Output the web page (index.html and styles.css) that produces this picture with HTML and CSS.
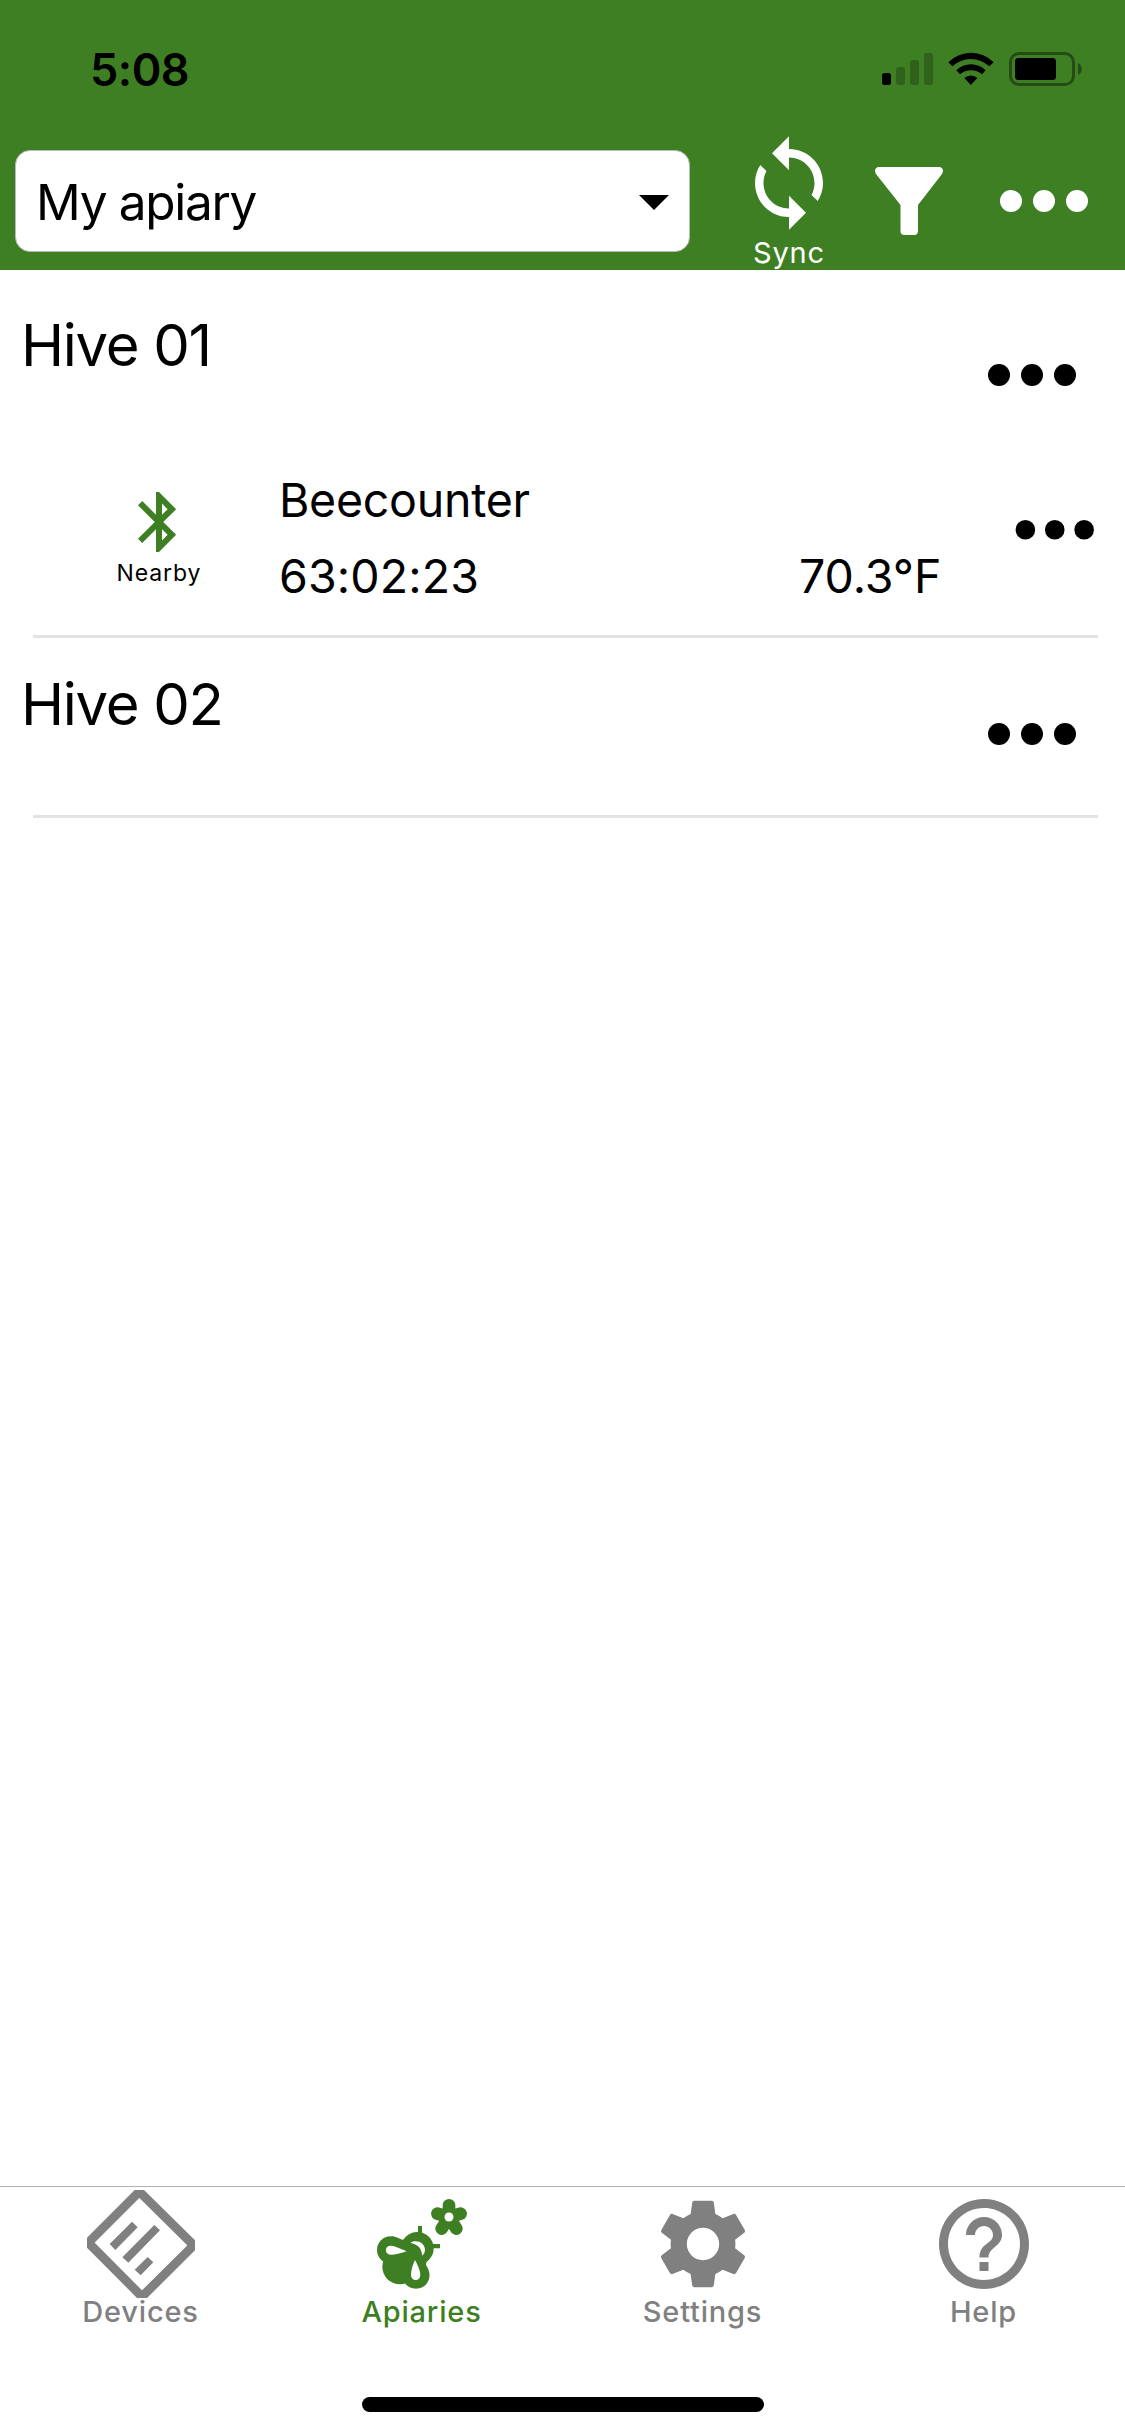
FILE: index.html
```html
<!DOCTYPE html>
<html lang="en">
<head>
<meta charset="utf-8">
<title>Apiaries</title>
<link rel="stylesheet" href="styles.css">
</head>
<body>
<svg class="defs" width="0" height="0">
  <symbol id="more" viewBox="0 0 24 24"><circle cx="6" cy="12" r="2"/><circle cx="12" cy="12" r="2"/><circle cx="18" cy="12" r="2"/></symbol>
</svg>
<div class="screen">
  <header class="header">
    <div class="status">
      <span class="time">5:08</span>
      <svg class="status-icons" viewBox="0 0 200 34">
        <rect x="0" y="21" width="9" height="12" rx="2.5"/>
        <g opacity=".22"><rect x="14" y="15" width="9" height="18" rx="2.5"/><rect x="28" y="8" width="9" height="25" rx="2.5"/><rect x="42" y="1" width="9" height="32" rx="2.5"/></g>
        <path transform="translate(-182 -52) scale(.33333)" d="M745 187A94 94 0 0 1 881 187L868 199A82 82 0 0 0 757 199ZM769 211A62 62 0 0 1 857 211L846 223A50 50 0 0 0 780 223ZM793 234A29 29 0 0 1 832 234L812.500 255Z"/>
        <rect x="128.500" y="1.500" width="63" height="31" rx="8.500" fill="none" stroke="#000" stroke-width="3" opacity=".4"/>
        <rect x="133" y="6" width="41" height="22" rx="3.500"/>
        <path d="M196 11c5 2 5 10 0 12z" opacity=".4"/>
      </svg>
    </div>
    <div class="toolbar">
      <div class="select"><span class="select-text">My apiary</span><svg class="caret" viewBox="0 0 30 15"><path d="M0 0h30L15 15z"/></svg></div>
      <div class="sync">
        <svg class="sync-icon" viewBox="0 0 24 24"><path d="M12 4V1L8 5l4 4V6c3.310 0 6 2.690 6 6 0 1.010-.25 1.970-.7 2.800l1.460 1.460C19.540 15.030 20 13.570 20 12c0-4.420-3.580-8-8-8zm0 14c-3.310 0-6-2.690-6-6 0-1.010.25-1.970.7-2.800L5.240 7.740C4.460 8.970 4 10.430 4 12c0 4.420 3.580 8 8 8v3l4-4-4-4v3z"/></svg>
        <span class="sync-label">Sync</span>
      </div>
      <svg class="filter" viewBox="0 0 68 68"><path d="M4 0H64C68 0 69 4 67 7L43 38V64Q43 68 39 68H29.500Q25.500 68 25.500 64V38L1 7C-1 4 0 0 4 0Z"/></svg>
      <svg class="more more-light"><use href="#more"/></svg>
    </div>
  </header>

  <main class="list">
    <section class="hive">
      <div class="hive-head"><h2 class="hive-name">Hive 01</h2><svg class="more"><use href="#more"/></svg></div>
      <div class="device">
        <div class="signal">
          <svg class="bluetooth" viewBox="0 0 24 24"><path d="M17.710 7.710L12 2h-1v7.590L6.410 5 5 6.410 10.590 12 5 17.590 6.410 19 11 14.410V22h1l5.710-5.710-4.300-4.290 4.300-4.290zM13 5.830l1.880 1.880L13 9.590V5.830zm1.880 10.460L13 18.170v-3.760l1.880 1.880z"/></svg>
          <span class="nearby">Nearby</span>
        </div>
        <div class="info">
          <span class="device-name">Beecounter</span>
          <div class="readings"><span class="count">63:02:23</span><span class="temp">70.3°F</span></div>
        </div>
        <svg class="more more-small"><use href="#more"/></svg>
      </div>
    </section>
    <section class="hive">
      <div class="hive-head"><h2 class="hive-name">Hive 02</h2><svg class="more"><use href="#more"/></svg></div>
    </section>
  </main>

  <nav class="tabs">
    <a class="tab">
      <svg class="tab-icon" viewBox="78 60 324 324"><path d="M235 65L398 226L243 380L82 218Z" fill="none" stroke="currentColor" stroke-width="27" stroke-linejoin="round"/><path d="M213 155L230 172L163 240L146 222ZM280 165L297 181L202 278L184 262ZM260 261L277 277L239 316L221 299Z"/></svg>
      <span class="tab-label">Devices</span>
    </a>
    <a class="tab active">
      <svg class="tab-icon" viewBox="84 60 324 324">
        <circle cx="232" cy="235" r="49"/><circle cx="180" cy="290" r="53"/><circle cx="152" cy="240" r="41"/><circle cx="228" cy="316" r="40.500"/>
        <path d="M157 199Q170 202 187 209L232 200L265 235L258 285Q263 291 266 304L220 330L140 270Z"/>
        <path d="M234 168h12v24h-12zM276 222h24v13h-24z"/>
        <path fill="#fff" d="M200 244Q165 227 151 227A13.500 13.500 0 0 0 151 254Q165 256 200 244ZM225 270Q213 295 213 316A14 14 0 0 0 241 316Q241 298 225 270ZM211 218C230 207 255 218 255 240Q255 250 247 257C243 233 238 226 211 218Z"/>
        <path d="M327 141V106M327 141L292 131M327 141L362 131M327 141L305 176M327 141L349 176" stroke="currentColor" stroke-width="38" stroke-linecap="round"/>
        <circle cx="327" cy="141" r="13.500" fill="#fff"/>
      </svg>
      <span class="tab-label">Apiaries</span>
    </a>
    <a class="tab">
      <svg class="tab-icon" viewBox="0 0 24 24"><path d="M19.140 12.940c.04-.3.06-.61.06-.94 0-.32-.02-.64-.07-.94l2.030-1.580c.18-.14.23-.41.12-.61l-1.920-3.320c-.12-.22-.37-.29-.59-.22l-2.390.96c-.5-.38-1.030-.7-1.620-.94L14.400 2.810c-.04-.24-.24-.41-.48-.41h-3.840c-.24 0-.43.17-.47.41L9.250 5.350C8.660 5.590 8.120 5.920 7.630 6.290L5.240 5.330c-.22-.08-.47 0-.59.22L2.740 8.870C2.620 9.080 2.660 9.340 2.860 9.480l2.030 1.580C4.840 11.360 4.800 11.690 4.800 12s.02.64.07.94l-2.030 1.580c-.18.14-.23.41-.12.61l1.920 3.320c.12.22.37.29.59.22l2.390-.96c.5.38 1.030.7 1.620.94l.36 2.540c.05.24.24.41.48.41h3.840c.24 0 .44-.17.47-.41l.36-2.540c.59-.24 1.130-.56 1.620-.94l2.390.96c.22.08.47 0 .59-.22l1.920-3.320c.12-.22.07-.47-.12-.61L19.140 12.940zM12 15.600c-1.980 0-3.600-1.620-3.600-3.600s1.620-3.600 3.600-3.600 3.600 1.620 3.600 3.600-1.620 3.600-3.600 3.600z"/></svg>
      <span class="tab-label">Settings</span>
    </a>
    <a class="tab">
      <svg class="tab-icon" viewBox="0 0 24 24"><path d="M11 18h2v-2h-2v2zm1-16C6.480 2 2 6.480 2 12s4.480 10 10 10 10-4.480 10-10S17.520 2 12 2zm0 18c-4.410 0-8-3.590-8-8s3.590-8 8-8 8 3.590 8 8-3.590 8-8 8zm0-14c-2.210 0-4 1.790-4 4h2c0-1.100.9-2 2-2s2 .9 2 2c0 2-3 1.750-3 5h2c0-2.250 3-2.500 3-5 0-2.210-1.790-4-4-4z"/></svg>
      <span class="tab-label">Help</span>
    </a>
  </nav>
  <div class="home"></div>
</div>
</body>
</html>
```
FILE: styles.css
```css
* { box-sizing: border-box; }
body { margin: 0; background: #fff; color: #000; font-family: Inter, "Liberation Sans", sans-serif; }
svg { display: block; flex: none; fill: currentColor; }
.defs { position: absolute; }
.screen { width: 1125px; height: 2436px; display: flex; flex-direction: column; overflow: hidden; }

.header { height: 270px; background: #3f7f23; flex: none; }
.status { height: 132px; padding: 0 43px 0 90px; display: flex; justify-content: space-between; align-items: flex-start; }
.time { margin-top: 42px; line-height: 56px; font-size: 45px; font-weight: 600; letter-spacing: -.5px; }
.status-icons { width: 200px; height: 34px; margin-top: 52px; }
.toolbar { height: 138px; display: flex; align-items: flex-start; padding-left: 15px; color: #fff; }
.select { width: 675px; height: 102px; margin-top: 18px; padding: 2px 20px 0; display: flex; align-items: center; justify-content: space-between; background: #fff; color: #000; border: 1px solid #b9b9b9; border-radius: 15px; }
.select-text { font-size: 49.500px; line-height: 60px; letter-spacing: -1.300px; white-space: nowrap; }
.caret { width: 30px; height: 15px; }
.sync { width: 102px; margin-left: 48px; display: flex; flex-direction: column; align-items: center; }
.sync-icon { width: 102px; height: 102px; }
.sync-label { margin-top: 1px; font-size: 29px; line-height: 36px; letter-spacing: .800px; }
.filter { width: 68px; height: 68px; margin: 35px 0 0 35px; }
.more { width: 132px; height: 132px; }
.more-light { margin: 3px 0 0 35px; }

.list { flex: 1; padding-top: 9px; }
.hive::after { content: ""; display: block; height: 3px; margin: 9px 27px 0 33px; background: #e3e3e7; }
.hive-head { height: 168px; display: flex; justify-content: space-between; padding: 0 27px 0 21px; }
.hive-name { margin: 31px 0 0; font-size: 58px; line-height: 70px; font-weight: 400; letter-spacing: -1.300px; white-space: nowrap; }
.hive-head .more { margin-top: 30px; }
.device { height: 179px; display: flex; padding: 0 12px 0 87px; }
.signal { width: 144px; display: flex; flex-direction: column; align-items: center; padding-top: 39px; }
.bluetooth { width: 72px; height: 72px; color: #3f7f23; }
.nearby { margin-top: 1px; font-size: 23px; line-height: 28px; letter-spacing: .900px; }
.info { width: 663px; margin-left: 48px; padding-top: 25px; display: flex; flex-direction: column; gap: 19px; font-size: 46.500px; line-height: 57px; }
.device-name { letter-spacing: -.250px; }
.count { letter-spacing: .150px; }
.readings { display: flex; justify-content: space-between; }
.more-small { width: 117.500px; height: 117.500px; margin: 24px 0 0 54px; }

.tabs { height: 174px; flex: none; display: grid; grid-template-columns: repeat(4, 281px); border-top: 1px solid #b2b2b2; color: #808080; }
.tab { display: flex; flex-direction: column; align-items: center; padding-top: 3px; }
.tab.active { color: #3f7f23; }
.tab-icon { width: 108px; height: 108px; }
.tab-label { margin-top: -4px; font-size: 29px; line-height: 36px; font-weight: 500; letter-spacing: .800px; }
.home { width: 402px; height: 15px; margin: 37px auto 24px; flex: none; border-radius: 8px; background: #000; }
```
